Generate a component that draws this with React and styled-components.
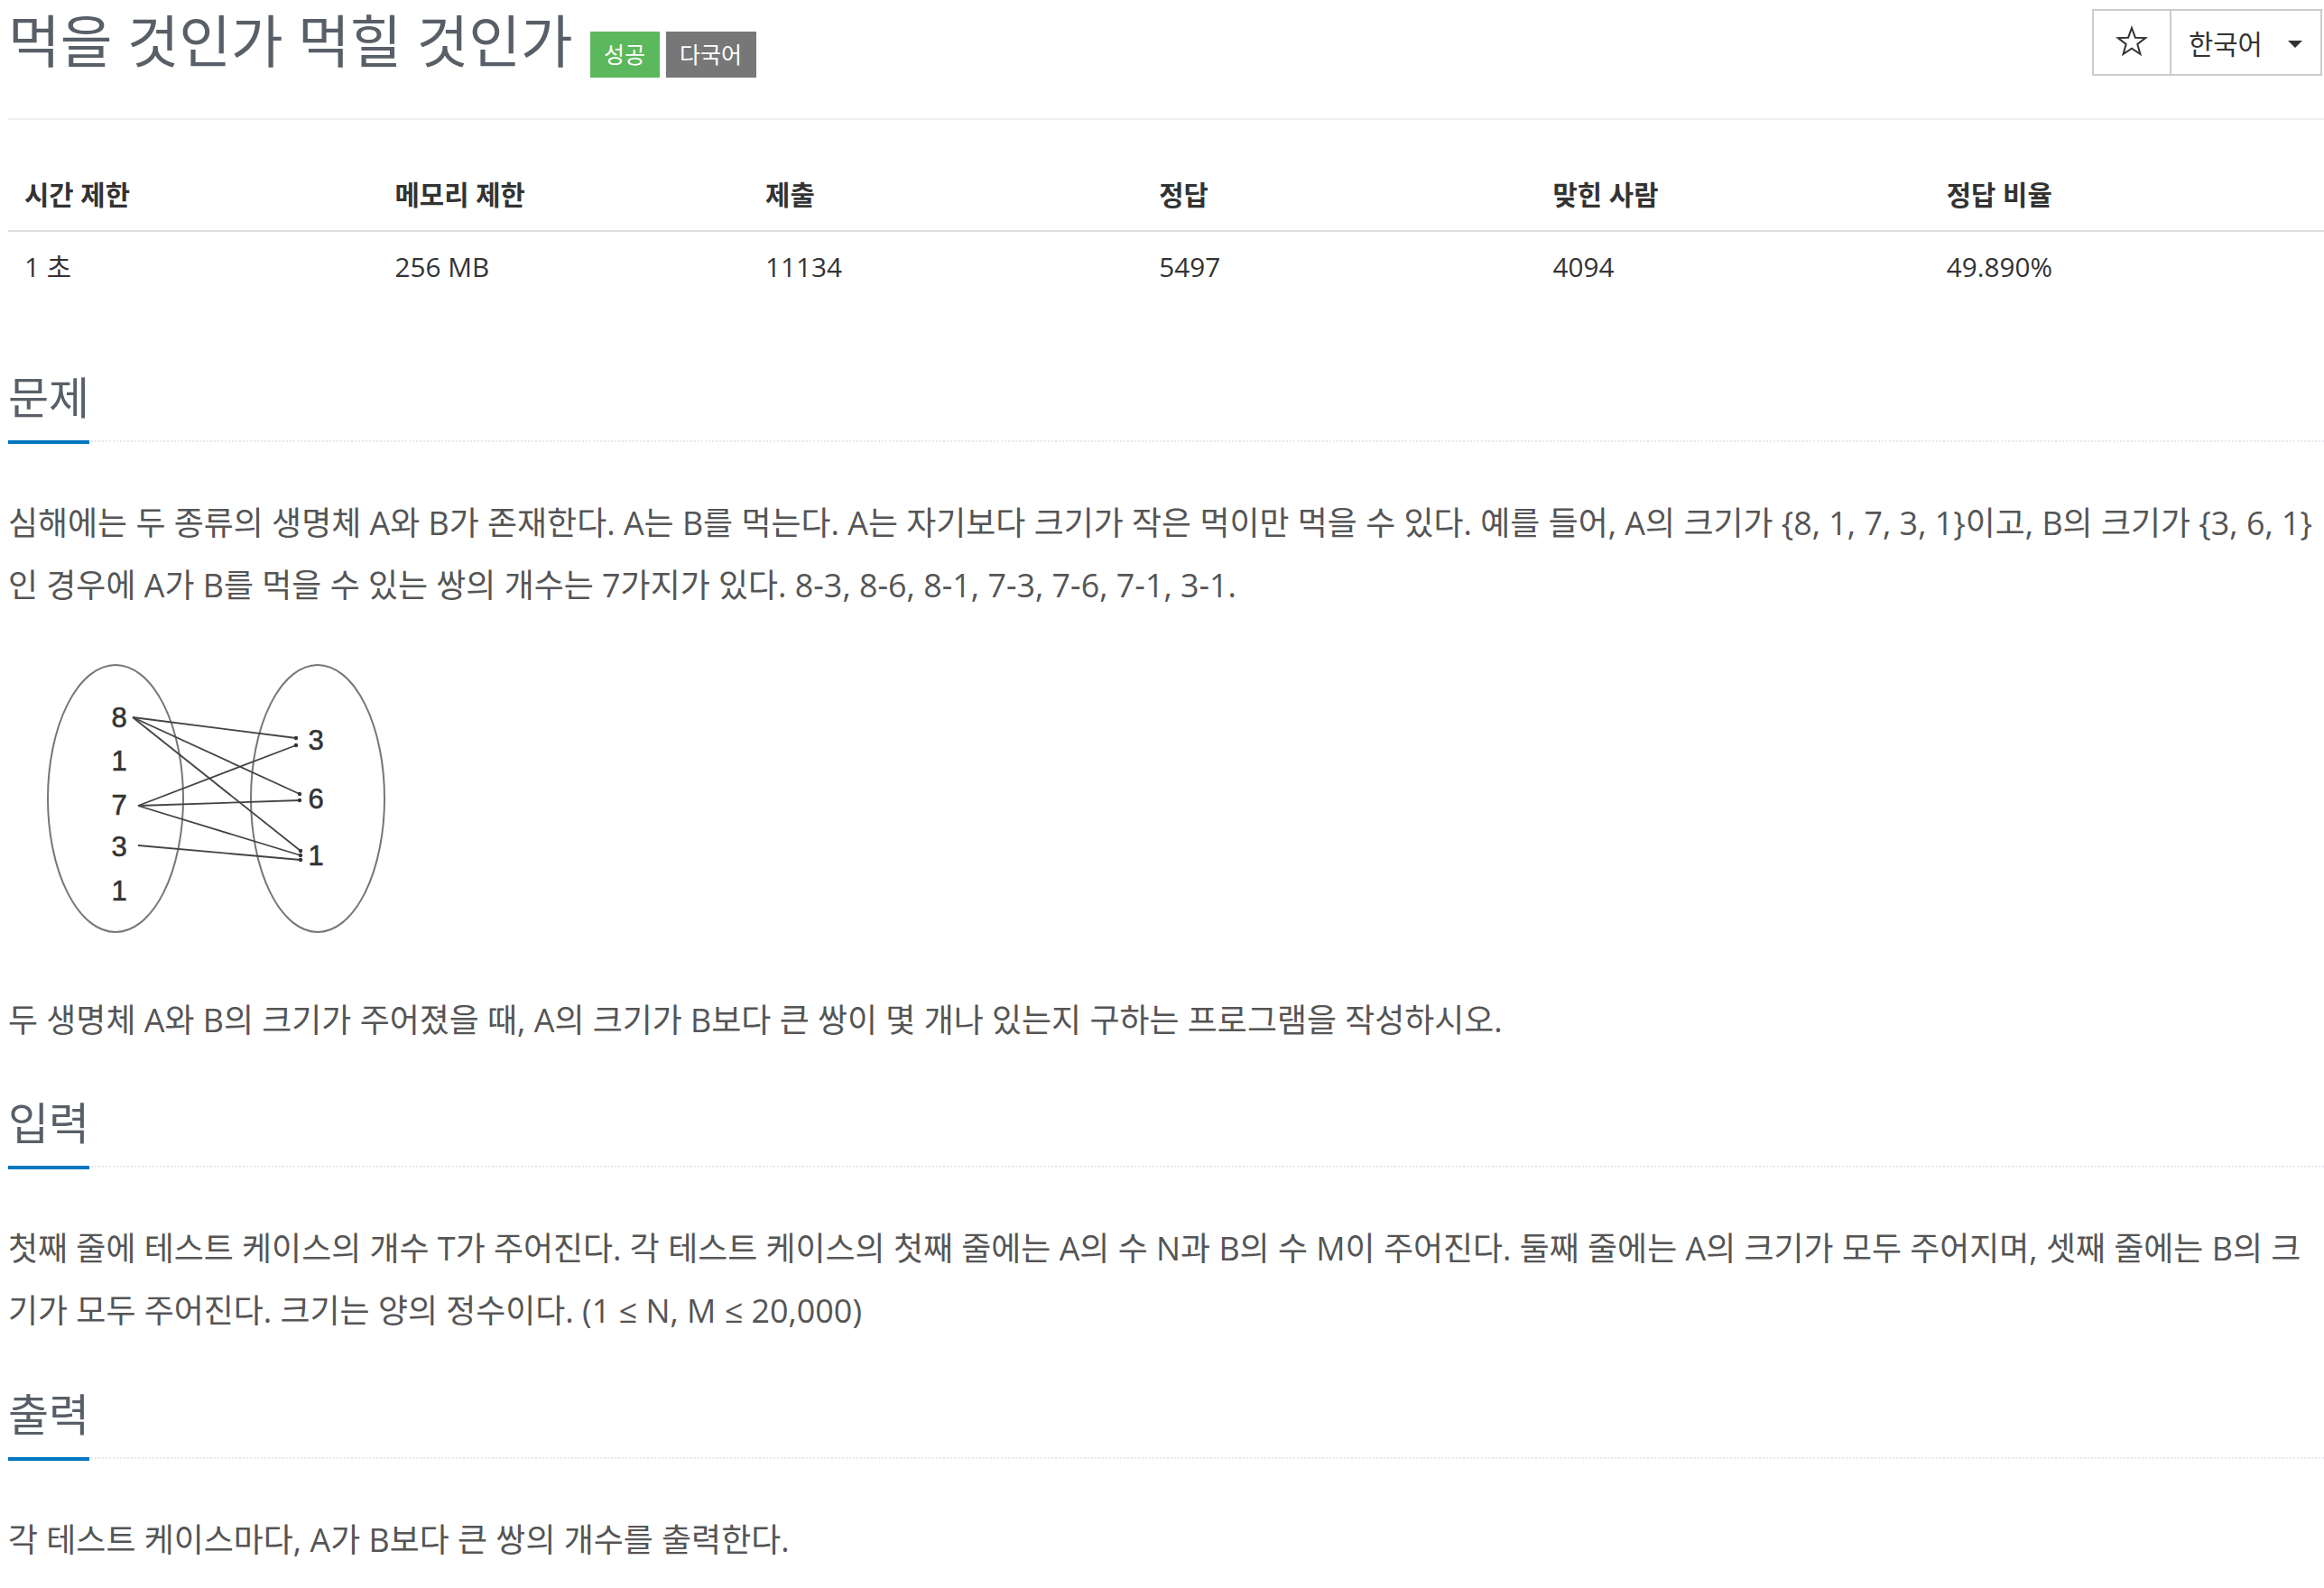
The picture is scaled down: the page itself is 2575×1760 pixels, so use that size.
import React from 'react';
import styled, {createGlobalStyle} from 'styled-components';

const GlobalStyle = createGlobalStyle`
  html, body { margin: 0; background: #fff; }
  body {
    padding: 0 0 0 9px;
    font-family: "Open Sans", "Noto Sans CJK KR", sans-serif;
    color: #555;
  }
`;

const Header = styled.div`
  display: flex;
  justify-content: space-between;
  align-items: flex-start;
  height: 131px;
  border-bottom: 2px solid #eee;
`;

const Title = styled.h1`
  margin: 11px 0 0;
  font-size: 62.7px;
  font-weight: 400;
  line-height: 1.1;
  color: #595f68;
  white-space: nowrap;
`;

const Label = styled.span`
  display: inline-flex;
  align-items: center;
  height: 51px;
  padding: 0 15.5px;
  margin-left: ${p => (p.$first ? '19px' : '7px')};
  vertical-align: -1px;
  font-size: 25px;
  color: #fff;
  background: ${p => p.$bg};
`;

const BtnGroup = styled.div`
  display: flex;
  margin: 10px 2px 0 0;
`;

const GroupBtn = styled.button`
  display: flex;
  align-items: center;
  justify-content: ${p => (p.$wide ? 'space-between' : 'center')};
  box-sizing: border-box;
  width: ${p => (p.$wide ? '169px' : '88px')};
  height: 74px;
  margin-left: ${p => (p.$wide ? '-2px' : '0')};
  padding: ${p => (p.$wide ? '0 20px 0 19px' : '0')};
  border: 2px solid #ccc;
  background: #fff;
  font-family: inherit;
  font-size: 29.7px;
  color: #333;
`;

const Caret = styled.span`
  width: 0;
  height: 0;
  margin-top: 4px;
  border-top: 8px solid #333;
  border-left: 8px solid transparent;
  border-right: 8px solid transparent;
`;

const InfoTable = styled.table`
  width: 100%;
  margin-top: 44px;
  border-collapse: collapse;
  font-size: 29.7px;
  line-height: 42px;
  color: #333;
`;

const Th = styled.th`
  width: ${p => p.$w}%;
  padding: 18px;
  text-align: left;
  font-weight: 700;
  border-bottom: 2px solid #ddd;
`;

const Td = styled.td`
  padding: 18px;
  text-align: left;
`;

const Section = styled.section`
  margin-top: ${p => p.$gap}px;
`;

const Headline = styled.div`
  display: flex;
  border-bottom: 2px dotted #e4e9f0;
`;

const HeadTitle = styled.h2`
  margin: 0 0 -4px;
  padding-bottom: 20.5px;
  border-bottom: 4px solid #0076c0;
  font-size: 49px;
  font-weight: 400;
  line-height: 54px;
  color: #595f68;
`;

const SectionBody = styled.div`
  padding-top: 55.6px;
`;

const Text = styled.p`
  margin: 0;
  font-size: 35.9px;
  line-height: 69px;
  color: #555;
`;

const Diagram = styled.svg`
  display: block;
  margin: 28px 0 32px;
`;

const NumText = styled.text`
  font-family: "Liberation Sans", Arial, sans-serif;
  font-size: 31px;
  fill: #333;
  stroke: #333;
  stroke-width: 0.6px;
`;

const StarIcon = () => (
  <svg width="40" height="40" viewBox="0 0 40 40">
    <polygon
      points="20,4 23.9,14.7 35.2,15.1 26.3,22 29.4,33 20,26.6 10.6,33 13.7,22 4.8,15.1 16.1,14.7"
      fill="none" stroke="#333" strokeWidth="2"/>
  </svg>
);

const cols = [
  ['시간 제한', '1 초', 16],
  ['메모리 제한', '256 MB', 16],
  ['제출', '11134', 17],
  ['정답', '5497', 17],
  ['맞힌 사람', '4094', 17],
  ['정답 비율', '49.890%', 17],
];

const leftNums = [['8', 84], ['1', 132], ['7', 181], ['3', 227], ['1', 276]];
const rightNums = [['3', 109], ['6', 174], ['1', 237]];
const edges = [
  [138, 84, 319, 107], [138, 84, 323, 169], [138, 84, 324, 232],
  [144, 182, 319, 115], [144, 182, 323, 176], [144, 182, 324, 237],
  [144, 226, 324, 242],
];

const EatDiagram = () => (
  <Diagram width="440" height="353" viewBox="0 0 440 353">
    <ellipse cx="119" cy="174" rx="75" ry="148" fill="none" stroke="#777" strokeWidth="2"/>
    <ellipse cx="343" cy="174" rx="74" ry="148" fill="none" stroke="#777" strokeWidth="2"/>
    {edges.map(([x1, y1, x2, y2], i) => (
      <g key={i}>
        <line x1={x1} y1={y1} x2={x2} y2={y2} stroke="#444" strokeWidth="1.8"/>
        <circle cx={x2} cy={y2} r="2.2" fill="#333"/>
      </g>
    ))}
    {leftNums.map(([n, y], i) => (
      <NumText key={'l' + i} x="123" y={y + 11} textAnchor="middle">{n}</NumText>
    ))}
    {rightNums.map(([n, y], i) => (
      <NumText key={'r' + i} x="341" y={y + 11} textAnchor="middle">{n}</NumText>
    ))}
  </Diagram>
);

const p1 = '심해에는 두 종류의 생명체 A와 B가 존재한다. A는 B를 먹는다. A는 자기보다 크기가 작은 먹이만 먹을 수 있다. 예를 들어, A의 크기가 {8, 1, 7, 3, 1}이고, B의 크기가 {3, 6, 1}인 경우에 A가 B를 먹을 수 있는 쌍의 개수는 7가지가 있다. 8-3, 8-6, 8-1, 7-3, 7-6, 7-1, 3-1.';
const p2 = '두 생명체 A와 B의 크기가 주어졌을 때, A의 크기가 B보다 큰 쌍이 몇 개나 있는지 구하는 프로그램을 작성하시오.';
const p3 = '첫째 줄에 테스트 케이스의 개수 T가 주어진다. 각 테스트 케이스의 첫째 줄에는 A의 수 N과 B의 수 M이 주어진다. 둘째 줄에는 A의 크기가 모두 주어지며, 셋째 줄에는 B의 크기가 모두 주어진다. 크기는 양의 정수이다. (1 ≤ N, M ≤ 20,000)';
const p4 = '각 테스트 케이스마다, A가 B보다 큰 쌍의 개수를 출력한다.';

const App = () => {
    return (
        <>
            <GlobalStyle/>
            <Header>
                <Title>
                    먹을 것인가 먹힐 것인가
                    <Label $first $bg="#5cb85c">성공</Label>
                    <Label $bg="#777">다국어</Label>
                </Title>
                <BtnGroup>
                    <GroupBtn><StarIcon/></GroupBtn>
                    <GroupBtn $wide>한국어<Caret/></GroupBtn>
                </BtnGroup>
            </Header>

            <InfoTable>
                <thead>
                <tr>{cols.map(c => <Th key={c[0]} $w={c[2]}>{c[0]}</Th>)}</tr>
                </thead>
                <tbody>
                <tr>{cols.map(c => <Td key={c[0]}>{c[1]}</Td>)}</tr>
                </tbody>
            </InfoTable>

            <Section $gap={78}>
                <Headline><HeadTitle>문제</HeadTitle></Headline>
                <SectionBody>
                    <Text>{p1}</Text>
                    <EatDiagram/>
                    <Text>{p2}</Text>
                </SectionBody>
            </Section>

            <Section $gap={52}>
                <Headline><HeadTitle>입력</HeadTitle></Headline>
                <SectionBody>
                    <Text>{p3}</Text>
                </SectionBody>
            </Section>

            <Section $gap={53}>
                <Headline><HeadTitle>출력</HeadTitle></Headline>
                <SectionBody>
                    <Text>{p4}</Text>
                </SectionBody>
            </Section>
        </>
    );
};

export default App;
